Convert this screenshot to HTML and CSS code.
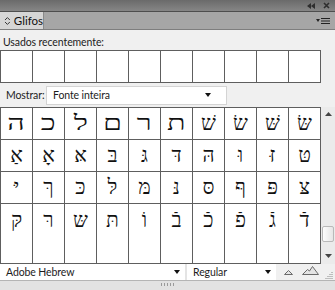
FILE: index.html
```html
<!DOCTYPE html>
<html lang="pt">
<head>
    <meta charset="UTF-8">
    <title>Glifos</title>
    <link rel="stylesheet" href="styles.css">
</head>
<body>
    <div class="titlebar">
        <svg class="tb-icon" width="8" height="6" viewBox="0 0 8 6"><path d="M4 0 L0 3 L4 6 Z M8 0 L4 3 L8 6 Z" fill="#2e2e2e"/></svg>
        <svg class="tb-icon" width="7" height="7" viewBox="0 0 7 7"><path d="M1 1 L6 6 M6 1 L1 6" stroke="#2e2e2e" stroke-width="1.6"/></svg>
    </div>

    <div class="tabbar">
        <div class="tab">
            <svg width="7" height="10" viewBox="0 0 7 10"><path d="M1 4 L3.5 1.5 L6 4 M1 6 L3.5 8.5 L6 6" fill="none" stroke="#333" stroke-width="1"/></svg>
            <span>Glifos</span>
        </div>
        <svg class="menu-icon" width="14" height="8" viewBox="0 0 14 8"><path d="M0 2 L4 2 L2 5 Z" fill="#222"/><path d="M5 1.5 H14 M5 4 H14 M5 6.5 H14" stroke="#222" stroke-width="1"/></svg>
    </div>

    <div class="panel">
        <div class="label">Usados recentemente:</div>
        <div class="cells recent">
            <div class="cell"></div><div class="cell"></div><div class="cell"></div><div class="cell"></div><div class="cell"></div>
            <div class="cell"></div><div class="cell"></div><div class="cell"></div><div class="cell"></div><div class="cell"></div>
        </div>

        <div class="show-row">
            <span class="show-label">Mostrar:</span>
            <div class="select show-select">
                <span>Fonte inteira</span>
                <span class="arrow"></span>
            </div>
        </div>

        <div class="main">
            <div class="cells glyphs">
                <div class="cell"><span class="wide">ה</span></div>
                <div class="cell"><span class="wide">כ</span></div>
                <div class="cell"><span class="wide">ל</span></div>
                <div class="cell"><span class="wide">ם</span></div>
                <div class="cell"><span class="wide">ר</span></div>
                <div class="cell"><span class="wide">ת</span></div>
                <div class="cell">שׁ</div>
                <div class="cell">שׂ</div>
                <div class="cell">שּׁ</div>
                <div class="cell">שּׂ</div>

                <div class="cell">אַ</div>
                <div class="cell">אָ</div>
                <div class="cell">אּ</div>
                <div class="cell">בּ</div>
                <div class="cell">גּ</div>
                <div class="cell">דּ</div>
                <div class="cell">הּ</div>
                <div class="cell">וּ</div>
                <div class="cell">זּ</div>
                <div class="cell">טּ</div>

                <div class="cell">יּ</div>
                <div class="cell">ךּ</div>
                <div class="cell">כּ</div>
                <div class="cell">לּ</div>
                <div class="cell">מּ</div>
                <div class="cell">נּ</div>
                <div class="cell">סּ</div>
                <div class="cell">ףּ</div>
                <div class="cell">פּ</div>
                <div class="cell">צּ</div>

                <div class="cell last">קּ</div>
                <div class="cell last">רּ</div>
                <div class="cell last">שּ</div>
                <div class="cell last">תּ</div>
                <div class="cell last">וֹ</div>
                <div class="cell last">בֿ</div>
                <div class="cell last">כֿ</div>
                <div class="cell last">פֿ</div>
                <div class="cell last">גֿ</div>
                <div class="cell last">דֿ</div>
            </div>

            <div class="scrollbar">
                <svg width="7" height="4" viewBox="0 0 7 4"><path d="M0 4 L3.5 0 L7 4 Z" fill="#444"/></svg>
                <div class="thumb"></div>
                <svg width="7" height="4" viewBox="0 0 7 4"><path d="M0 0 L3.5 4 L7 0 Z" fill="#444"/></svg>
            </div>
        </div>

        <div class="bottom-bar">
            <div class="select font-select">
                <span>Adobe Hebrew</span>
                <span class="arrow"></span>
            </div>
            <div class="select style-select">
                <span>Regular</span>
                <span class="arrow"></span>
            </div>
            <div class="size-buttons">
                <svg width="9" height="5" viewBox="0 0 9 5"><path d="M0.5 4.5 L4.5 0.5 L8.5 4.5 Z" fill="#e4e4e4" stroke="#6a6a6a" stroke-width="1"/></svg>
                <svg width="17" height="9" viewBox="0 0 17 9"><path d="M0.5 8.5 L5.5 3.5 L7.5 5 L10.5 0.5 L16.5 8.5 Z" fill="#e4e4e4" stroke="#6a6a6a" stroke-width="1"/></svg>
            </div>
            <svg class="resize" width="8" height="8" viewBox="0 0 8 8"><path d="M7 1 V2 M5 3 V4 M7 3 V4 M3 5 V6 M5 5 V6 M7 5 V6 M1 7 V8 M3 7 V8 M5 7 V8 M7 7 V8" stroke="#8a8a8a" stroke-width="1"/></svg>
        </div>
        <div class="grip-strip">
            <svg width="13" height="3" viewBox="0 0 13 3"><path d="M0.5 0 V3 M3.5 0 V3 M6.5 0 V3 M9.5 0 V3 M12.5 0 V3" stroke="#9a9a9a" stroke-width="1"/></svg>
        </div>
    </div>
</body>
</html>
```

FILE: styles.css
```css
* {
    margin: 0;
    padding: 0;
    box-sizing: border-box;
}

body {
    width: 335px;
    height: 290px;
    overflow: hidden;
    background: #f0f0f0;
    font-family: Lato, 'Liberation Sans', sans-serif;
    font-size: 10.5px;
    letter-spacing: -0.1px;
    color: #1c1c1c;
}

.titlebar {
    height: 12px;
    background: linear-gradient(#6a6a6a, #868686);
    border-bottom: 1px solid #4e4e4e;
    display: flex;
    justify-content: flex-end;
    align-items: center;
    gap: 8px;
    padding-right: 5px;
}

.tabbar {
    height: 18px;
    background: #a6a6a6;
    border-bottom: 1px solid #7e7e7e;
    display: flex;
    align-items: stretch;
    justify-content: space-between;
}

.tab {
    width: 44px;
    background: #d6d6d6;
    border-right: 1px solid #8a8a8a;
    display: flex;
    align-items: center;
    gap: 3px;
    padding-left: 4px;
    font-size: 11.5px;
    letter-spacing: 0;
    color: #111;
}

.menu-icon {
    align-self: center;
    margin-right: 5px;
}

.label {
    height: 20px;
    padding: 6px 0 0 3px;
    line-height: 12px;
}

.cells {
    display: grid;
    grid-template-columns: repeat(10, 31px);
    gap: 1px;
    padding: 1px;
    width: 321px;
    background: #5e5e5e;
}

.cells .cell {
    height: 31px;
    background: #fff;
}

.show-row {
    height: 24px;
    display: flex;
    align-items: center;
    padding-left: 6px;
}

.show-label {
    width: 40px;
}

.select {
    background: #fff;
    display: flex;
    align-items: center;
    justify-content: space-between;
    padding-left: 6px;
}

.show-select {
    width: 181px;
    height: 19px;
    border: 1px solid #d4d4d4;
    padding-right: 15px;
}

.arrow {
    width: 0;
    height: 0;
    border-left: 3.5px solid transparent;
    border-right: 3.5px solid transparent;
    border-top: 4px solid #111;
}

.main {
    display: flex;
}

.glyphs .cell {
    display: flex;
    justify-content: center;
    align-items: center;
    font-family: 'Liberation Serif', 'DejaVu Sans', serif;
    font-size: 21px;
    letter-spacing: 0;
    color: #111;
}

.glyphs .cell.last {
    height: 59px;
    align-items: flex-start;
    padding-top: 4px;
}

.wide {
    display: inline-block;
    transform: scaleX(1.45);
}

.scrollbar {
    width: 14px;
    background: #ebebeb;
    display: flex;
    flex-direction: column;
    align-items: center;
    padding: 5px 0 6px;
}

.thumb {
    margin-top: auto;
    margin-bottom: 12px;
    width: 12px;
    height: 16px;
    background: linear-gradient(90deg, #fdfdfd, #e6e6e6);
    border: 1px solid #b9b9b9;
    border-radius: 2px;
}

.bottom-bar {
    height: 17px;
    display: flex;
    align-items: stretch;
    border-bottom: 1px solid #b4b4b4;
}

.font-select {
    width: 187px;
    padding-right: 5px;
    border-right: 2px solid #e4e4e4;
}

.style-select {
    width: 89px;
    padding-right: 5px;
}

.size-buttons {
    display: flex;
    align-items: flex-end;
    gap: 9px;
    padding: 0 0 5px 8px;
}

.resize {
    align-self: flex-end;
    margin: 0 0 1px 6px;
}

.grip-strip {
    height: 9px;
    background: #e2e2e2;
    display: flex;
    justify-content: center;
    padding-top: 2px;
}
```
